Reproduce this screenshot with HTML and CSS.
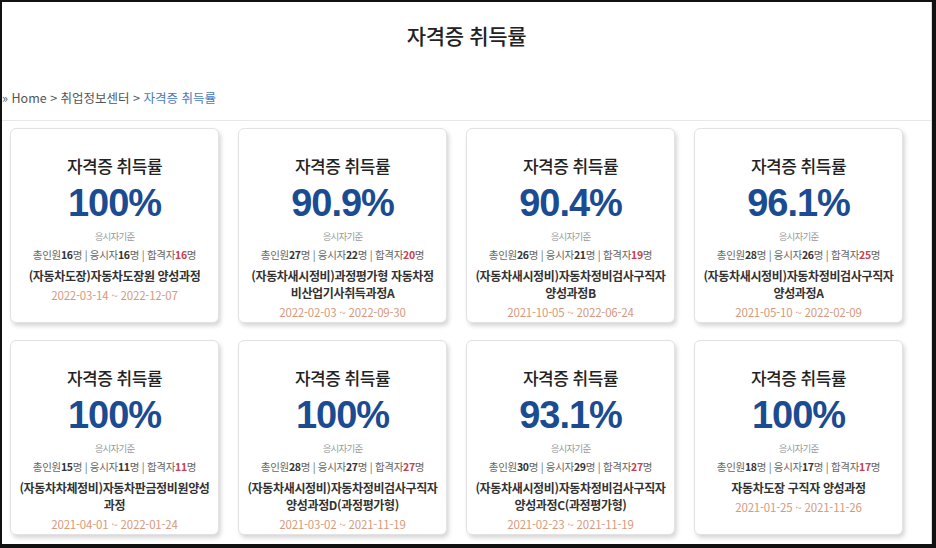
FILE: index.html
```html
<!DOCTYPE html>
<html lang="ko">
<head>
    <meta charset="UTF-8">
    <title>자격증 취득률</title>
    <link rel="stylesheet" href="styles.css">
</head>
<body>
<div class="page">
    <h1 class="page-title">자격증 취득률</h1>
    <div class="breadcrumb">» Home &gt; 취업정보센터 &gt; <span class="current">자격증 취득률</span></div>

    <div class="card-grid">
        <div class="card">
            <div class="card-title">자격증 취득률</div>
            <div class="rate">100%</div>
            <div class="basis">응시자기준</div>
            <div class="stats">총인원<b>16</b>명 | 응시자<b>16</b>명 | 합격자<b class="pass">16</b>명</div>
            <div class="course">(자동차도장)자동차도장원 양성과정</div>
            <div class="period">2022-03-14 ~ 2022-12-07</div>
        </div>
        <div class="card">
            <div class="card-title">자격증 취득률</div>
            <div class="rate">90.9%</div>
            <div class="basis">응시자기준</div>
            <div class="stats">총인원<b>27</b>명 | 응시자<b>22</b>명 | 합격자<b class="pass">20</b>명</div>
            <div class="course">(자동차새시정비)과정평가형 자동차정<br>비산업기사취득과정A</div>
            <div class="period">2022-02-03 ~ 2022-09-30</div>
        </div>
        <div class="card">
            <div class="card-title">자격증 취득률</div>
            <div class="rate">90.4%</div>
            <div class="basis">응시자기준</div>
            <div class="stats">총인원<b>26</b>명 | 응시자<b>21</b>명 | 합격자<b class="pass">19</b>명</div>
            <div class="course">(자동차새시정비)자동차정비검사구직자<br>양성과정B</div>
            <div class="period">2021-10-05 ~ 2022-06-24</div>
        </div>
        <div class="card">
            <div class="card-title">자격증 취득률</div>
            <div class="rate">96.1%</div>
            <div class="basis">응시자기준</div>
            <div class="stats">총인원<b>28</b>명 | 응시자<b>26</b>명 | 합격자<b class="pass">25</b>명</div>
            <div class="course">(자동차새시정비)자동차정비검사구직자<br>양성과정A</div>
            <div class="period">2021-05-10 ~ 2022-02-09</div>
        </div>

        <div class="card">
            <div class="card-title">자격증 취득률</div>
            <div class="rate">100%</div>
            <div class="basis">응시자기준</div>
            <div class="stats">총인원<b>15</b>명 | 응시자<b>11</b>명 | 합격자<b class="pass">11</b>명</div>
            <div class="course">(자동차차체정비)자동차판금정비원양성<br>과정</div>
            <div class="period">2021-04-01 ~ 2022-01-24</div>
        </div>
        <div class="card">
            <div class="card-title">자격증 취득률</div>
            <div class="rate">100%</div>
            <div class="basis">응시자기준</div>
            <div class="stats">총인원<b>28</b>명 | 응시자<b>27</b>명 | 합격자<b class="pass">27</b>명</div>
            <div class="course">(자동차새시정비)자동차정비검사구직자<br>양성과정D(과정평가형)</div>
            <div class="period">2021-03-02 ~ 2021-11-19</div>
        </div>
        <div class="card">
            <div class="card-title">자격증 취득률</div>
            <div class="rate">93.1%</div>
            <div class="basis">응시자기준</div>
            <div class="stats">총인원<b>30</b>명 | 응시자<b>29</b>명 | 합격자<b class="pass">27</b>명</div>
            <div class="course">(자동차새시정비)자동차정비검사구직자<br>양성과정C(과정평가형)</div>
            <div class="period">2021-02-23 ~ 2021-11-19</div>
        </div>
        <div class="card">
            <div class="card-title">자격증 취득률</div>
            <div class="rate">100%</div>
            <div class="basis">응시자기준</div>
            <div class="stats">총인원<b>18</b>명 | 응시자<b>17</b>명 | 합격자<b class="pass">17</b>명</div>
            <div class="course">자동차도장 구직자 양성과정</div>
            <div class="period">2021-01-25 ~ 2021-11-26</div>
        </div>
    </div>
</div>
</body>
</html>
```

FILE: styles.css
```css
body {
    margin: 0;
    background-color: #111; /* screenshot frame */
    font-family: "Noto Sans CJK KR", "Noto Sans", sans-serif;
    color: #333;
}
.page {
    width: 929px;
    height: 542px;
    margin: 2px 0 0 2px;
    background-color: #FFFFFF;
    border-right: 1px solid #ddd;
    overflow: hidden;
}
.page-title {
    margin: 0;
    padding-top: 18px;
    font-size: 21px;
    line-height: 30px;
    font-weight: 500;
    color: #222;
    text-align: center;
    letter-spacing: -0.3px;
}
.breadcrumb {
    margin-top: 39px;
    padding-bottom: 13px;
    border-bottom: 1px solid #e8e8e8;
    font-size: 12.5px;
    line-height: 18px;
    color: #555;
}
.breadcrumb .current {
    color: #4a78c2;
}
.card-grid {
    display: grid;
    grid-template-columns: repeat(4, 209px);
    column-gap: 19px;
    row-gap: 17px;
    padding: 7px 0 0 8px;
}
.card {
    height: 195px;
    box-sizing: border-box;
    padding-top: 25px;
    border: 1px solid #e2e2e2;
    border-radius: 6px;
    background-color: #FFFFFF;
    box-shadow: 2px 3px 4px rgba(0,0,0,0.16);
    text-align: center;
}
.card-title {
    font-size: 17px;
    line-height: 24px;
    font-weight: 500;
    color: #222;
    letter-spacing: -0.5px;
}
.rate {
    margin-top: 3px;
    font-family: "Liberation Sans", Arial, sans-serif;
    font-size: 38px;
    line-height: 44px;
    font-weight: bold;
    color: #1b4b91;
    letter-spacing: -1px;
}
.basis {
    margin-top: 3px;
    font-size: 9.5px;
    line-height: 16px;
    color: #999;
    letter-spacing: -0.8px;
}
.stats {
    margin-top: 2px;
    font-size: 10.5px;
    line-height: 18px;
    color: #666;
    letter-spacing: -0.3px;
}
.stats b {
    color: #333;
}
.stats b.pass {
    color: #c8414d;
}
.course {
    margin-top: 3px;
    font-size: 12px;
    line-height: 17px;
    font-weight: bold;
    color: #333;
    letter-spacing: -0.35px;
    white-space: nowrap;
}
.period {
    margin-top: 2px;
    font-size: 11.5px;
    line-height: 18px;
    color: #d59a7c;
    letter-spacing: -0.2px;
}
```
